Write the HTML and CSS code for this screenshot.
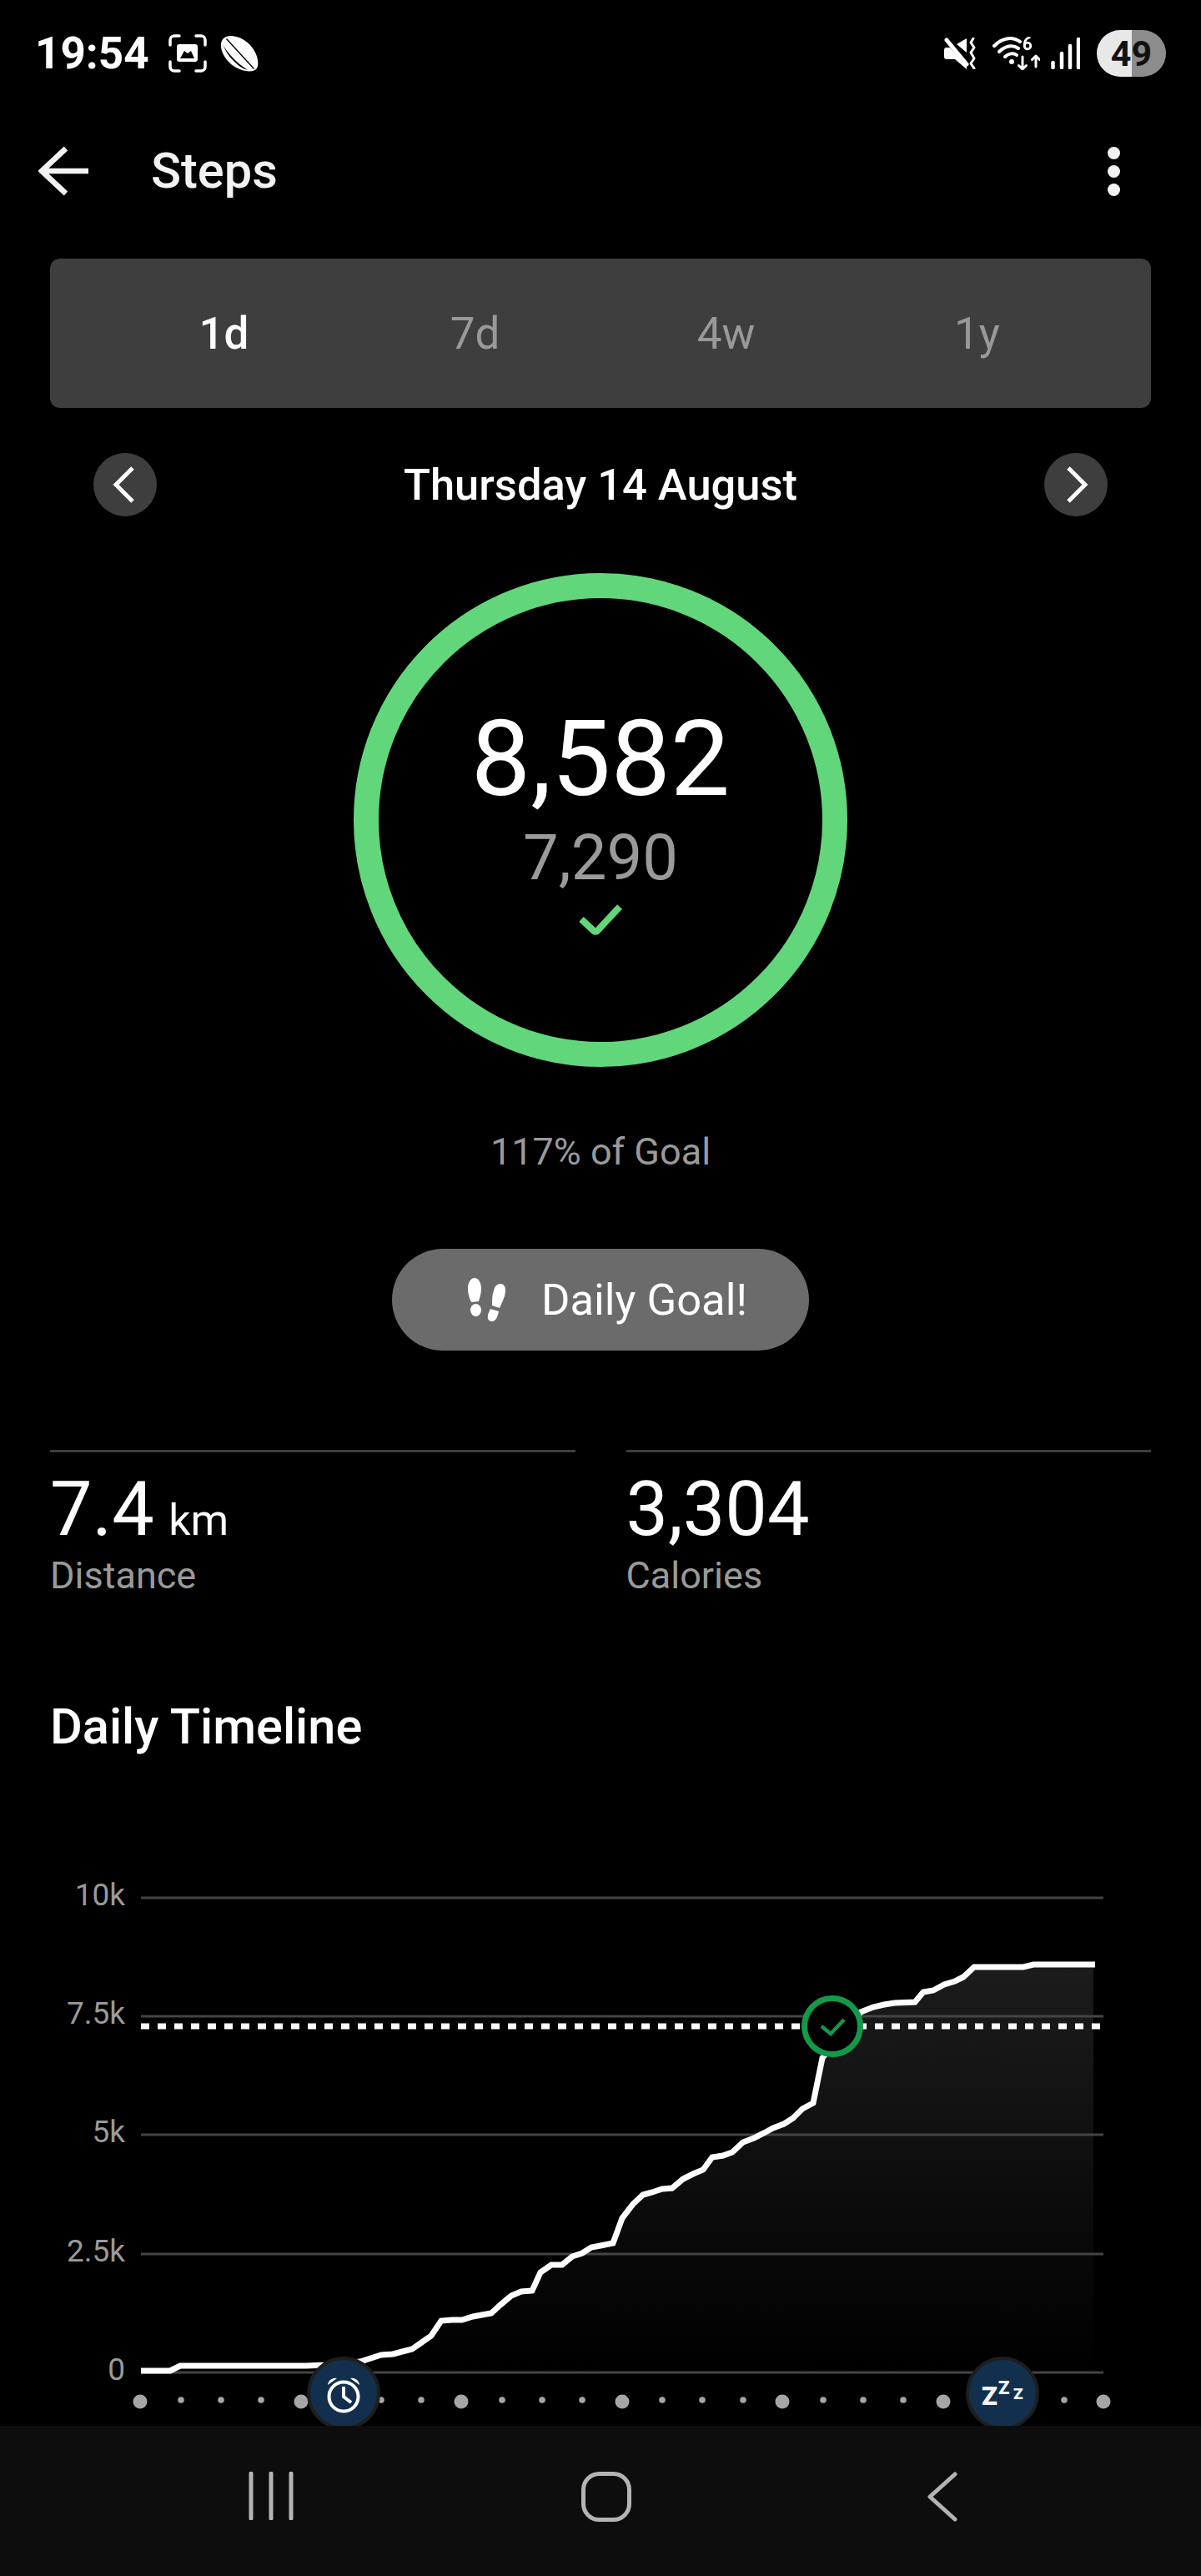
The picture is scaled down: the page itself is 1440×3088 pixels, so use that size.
FILE: index.html
```html
<!DOCTYPE html>
<html lang="en">
<head>
    <meta charset="UTF-8">
    <meta name="viewport" content="width=device-width, initial-scale=1.0">
    <title>Steps</title>
    <link rel="stylesheet" href="styles.css">
</head>
<body>

    <!-- Status bar -->
    <div class="status-bar">
        <div class="status-left">
            <span class="clock">19:54</span>
            <svg class="icon-capture" viewBox="0 0 46 46">
                <path d="M2 13V7a5 5 0 0 1 5-5h6M33 2h6a5 5 0 0 1 5 5v6M44 33v6a5 5 0 0 1-5 5h-6M13 44H7a5 5 0 0 1-5-5v-6" fill="none" stroke="#fff" stroke-width="3.500" stroke-linecap="round"/>
                <path fill-rule="evenodd" d="M13 12h19a3 3 0 0 1 3 3v15a3 3 0 0 1-3 3H13a3 3 0 0 1-3-3V15a3 3 0 0 1 3-3zM14 29h17l-4-9-4 3-4-3z" fill="#fff"/>
            </svg>
            <svg class="icon-ball" viewBox="0 0 46 46">
                <path fill-rule="evenodd" d="M3 5C9-1 24 2 34 12s13 25 8 30-22 2-32-8S-3 11 3 5zM7 5l33 36-1 1L6 6zM2 12c3 8 8 15 13 20s10 9 17 11C25 38 18 33 13 27S5 18 2 12z" fill="#fff"/>
            </svg>
        </div>
        <div class="status-right">
            <svg class="icon-mute" viewBox="0 0 38 38">
                <path d="M0 15a3 3 0 0 1 3-3h4l20 22v4L13 26H3a3 3 0 0 1-3-3zM15 8L27 1v17z" fill="#fff"/>
                <path d="M3 3l24 29" stroke="#fff" stroke-width="5" stroke-linecap="round"/>
                <path d="M35 1l-3 5 4 6-4 6 4 7-4 6 4 6" fill="none" stroke="#fff" stroke-width="3" stroke-linecap="round" stroke-linejoin="round"/>
            </svg>
            <svg class="icon-wifi" viewBox="0 0 57 40">
                <g fill="none" stroke="#fff" stroke-linecap="round" stroke-linejoin="round">
                    <path d="M2 11C11 2 23-1 33 6" stroke-width="4"/>
                    <path d="M8 18c7-7 16-9 23-4" stroke-width="4"/>
                    <path d="M15 24c4-4 10-5 14-2" stroke-width="4"/>
                    <path d="M36 24v15m-4.500-4.500 4.500 4.500 4.500-4.500M52 36V23m-4.500 4.500 4.500-4.500 4.500 4.500" stroke-width="3"/>
                    <circle cx="42" cy="11" r="3.800" stroke-width="2.800"/>
                    <path d="M38.200 11c0-5 2-9 6-10" stroke-width="2.800"/>
                </g>
                <circle cx="23" cy="30" r="3" fill="#fff"/>
            </svg>
            <svg class="icon-signal" viewBox="0 0 35 38">
                <g stroke="#fff" stroke-width="4.500" stroke-linecap="round">
                    <path d="M2.500 30v6M13 19v17M23 10v26M33 2v34"/>
                </g>
            </svg>
            <div class="battery"><span>49</span></div>
        </div>
    </div>

    <!-- App bar -->
    <div class="app-bar">
        <svg class="icon-back" viewBox="0 0 60 60">
            <path d="M33 3L4 30l29 27M4 30h56" fill="none" stroke="#f2f2f2" stroke-width="6.500"/>
        </svg>
        <h1 class="page-title">Steps</h1>
        <div class="more-dots">
            <span></span><span></span><span></span>
        </div>
    </div>

    <div class="tabs">
        <div class="tab active">1d</div>
        <div class="tab">7d</div>
        <div class="tab">4w</div>
        <div class="tab">1y</div>
    </div>

    <div class="date-row">
        <div class="round-btn">
            <svg viewBox="0 0 76 76"><path d="M47 18L27 38l20 20" fill="none" stroke="#fff" stroke-width="5"/></svg>
        </div>
        <div class="date-label">Thursday 14 August</div>
        <div class="round-btn">
            <svg viewBox="0 0 76 76"><path d="M29 18l20 20-20 20" fill="none" stroke="#fff" stroke-width="5"/></svg>
        </div>
    </div>

    <!-- Ring -->
    <div class="ring">
        <div class="ring-value">8,582</div>
        <div class="ring-goal">7,290</div>
        <svg class="ring-check" viewBox="0 0 52 38">
            <path d="M3 19l15 14q2 1.500 4 0L49 4" fill="none" stroke="#62d67b" stroke-width="8"/>
        </svg>
    </div>

    <div class="goal-percent">117% of Goal</div>

    <div class="pill">
        <svg class="icon-steps" viewBox="0 0 48 52">
            <path d="M9 0c5 0 8 6 8 13 0 6-2 11-3 15L5 29C3 25 1 19 1 13 1 6 4 0 9 0z" fill="#fff"/>
            <ellipse cx="10.500" cy="38.500" rx="6.500" ry="7.500" fill="#fff"/>
            <path d="M40 7c4 0 6 3 6 8 0 7-4 14-7 21l-9-3c0-7 0-13 2-18 1-5 4-8 8-8z" fill="#fff"/>
            <path d="M28 37l10 3c-1 5-3 12-8 12-4 0-6-3-5-7 0-3 2-5 3-8z" fill="#fff"/>
        </svg>
        <span>Daily Goal!</span>
    </div>

    <!-- Distance and calories -->
    <div class="stats">
        <div class="stat">
            <div class="stat-value">7.4 <span class="stat-unit">km</span></div>
            <div class="stat-label">Distance</div>
        </div>
        <div class="stat">
            <div class="stat-value">3,304</div>
            <div class="stat-label">Calories</div>
        </div>
    </div>

    <h2 class="section-title">Daily Timeline</h2>

    <!-- Chart -->
    <div class="chart">
        <svg viewBox="0 0 1440 688" width="1440" height="688">
            <defs>
                <linearGradient id="areaFill" x1="0" y1="0" x2="0" y2="1">
                    <stop offset="0" stop-color="#1c1c1c"/>
                    <stop offset="1" stop-color="#000"/>
                </linearGradient>
            </defs>

            <path fill="url(#areaFill)" d="M169 622H204L216 616H367L390 615L432 611L457 603L471 602L494 596L517 580L529 562L542 561H554L567 557L589 553L600 543L613 532L625 527L638 526L648 504L661 495H674L686 485L698 481L709 474L720 472L735 469L746 439L759 422L771 411L782 408L794 404L806 403L819 392L831 386L843 381L854 366L867 364L878 360L891 348L904 343L916 337L927 331L940 326L951 319L962 308L975 301L986 247L1032 192L1047 186L1060 183L1073 181L1097 180L1107 168L1119 166L1132 159L1145 155L1155 150L1168 138H1227L1239 135H1311V624H169Z"/>

            <g class="grid">
                <line x1="169" y1="55" x2="1323" y2="55"/>
                <line x1="169" y1="197" x2="1323" y2="197"/>
                <line x1="169" y1="339" x2="1323" y2="339"/>
                <line x1="169" y1="482" x2="1323" y2="482"/>
                <line x1="169" y1="624" x2="1323" y2="624"/>
            </g>

            <text class="axis" x="150" y="64">10k</text>
            <text class="axis" x="150" y="206">7.5k</text>
            <text class="axis" x="150" y="348">5k</text>
            <text class="axis" x="150" y="491">2.5k</text>
            <text class="axis" x="150" y="633">0</text>

            <line class="goal-line" x1="169" y1="209" x2="1320" y2="209"/>

            <path class="steps-line" d="M169 622H204L216 616H367L390 615L432 611L457 603L471 602L494 596L517 580L529 562L542 561H554L567 557L589 553L600 543L613 532L625 527L638 526L648 504L661 495H674L686 485L698 481L709 474L720 472L735 469L746 439L759 422L771 411L782 408L794 404L806 403L819 392L831 386L843 381L854 366L867 364L878 360L891 348L904 343L916 337L927 331L940 326L951 319L962 308L975 301L986 247L1032 192L1047 186L1060 183L1073 181L1097 180L1107 168L1119 166L1132 159L1145 155L1155 150L1168 138H1227L1239 135H1313"/>

            <circle class="goal-mark" cx="998" cy="209" r="33.500"/>
            <path d="M985 209l11 9 16-17" fill="none" stroke="#14994b" stroke-width="4.500"/>

            <g class="tick-big">
                <circle cx="168" cy="659" r="8.500"/>
                <circle cx="361" cy="659" r="8.500"/>
                <circle cx="553" cy="659" r="8.500"/>
                <circle cx="746" cy="659" r="8.500"/>
                <circle cx="938" cy="659" r="8.500"/>
                <circle cx="1131" cy="659" r="8.500"/>
                <circle cx="1323" cy="659" r="8.500"/>
            </g>
            <g class="tick-small">
                <circle cx="217" cy="657" r="3.800"/>
                <circle cx="265" cy="657" r="3.800"/>
                <circle cx="313" cy="657" r="3.800"/>
                <circle cx="457" cy="657" r="3.800"/>
                <circle cx="505" cy="657" r="3.800"/>
                <circle cx="602" cy="657" r="3.800"/>
                <circle cx="650" cy="657" r="3.800"/>
                <circle cx="698" cy="657" r="3.800"/>
                <circle cx="794" cy="657" r="3.800"/>
                <circle cx="842" cy="657" r="3.800"/>
                <circle cx="891" cy="657" r="3.800"/>
                <circle cx="987" cy="657" r="3.800"/>
                <circle cx="1035" cy="657" r="3.800"/>
                <circle cx="1083" cy="657" r="3.800"/>
                <circle cx="1276" cy="657" r="3.800"/>
            </g>

            <!-- Wake up marker -->
            <circle class="marker" cx="412" cy="649" r="42"/>
            <g fill="none" stroke="#fff" stroke-width="4">
                <circle cx="412" cy="653" r="17.500"/>
                <path d="M412 641v12l9 7"/>
            </g>
            <path d="M393 639a9 9 0 0 1 11-8zM431 639a9 9 0 0 0-11-8z" fill="#fff"/>

            <!-- Bed time marker -->
            <circle class="marker" cx="1202" cy="649" r="42"/>
            <text class="zzz zzz-big" x="1177" y="663">Z</text>
            <text class="zzz zzz-mid" x="1197" y="650">Z</text>
            <text class="zzz zzz-small" x="1215" y="656">Z</text>
        </svg>
    </div>

    <!-- Navigation bar -->
    <div class="nav-bar">
        <svg class="nav-recents" viewBox="0 0 54 58">
            <path d="M3 2v54M27 2v54M51 2v54" stroke="#b4b4b4" stroke-width="5" stroke-linecap="round"/>
        </svg>
        <svg class="nav-home" viewBox="0 0 60 60">
            <rect x="2.500" y="2.500" width="55" height="55" rx="19" fill="none" stroke="#b4b4b4" stroke-width="5"/>
        </svg>
        <svg class="nav-return" viewBox="0 0 36 60">
            <path d="M33 3L3 30l30 27" fill="none" stroke="#b4b4b4" stroke-width="5" stroke-linecap="round" stroke-linejoin="round"/>
        </svg>
    </div>

</body>
</html>
```

FILE: styles.css
```css
* {
    box-sizing: border-box;
}

body {
    margin: 0;
    width: 1440px;
    height: 3088px;
    overflow: hidden;
    background-color: #000;
    color: #fff;
    font-family: 'Roboto', 'Liberation Sans', sans-serif;
    display: flex;
    flex-direction: column;
}

h1, h2 {
    margin: 0;
}

/* Status bar */
.status-bar {
    height: 128px;
    flex: none;
    padding: 0 42px 0 42px;
    display: flex;
    justify-content: space-between;
    align-items: center;
}

.status-left, .status-right {
    display: flex;
    align-items: center;
}

.clock {
    font-size: 53px;
    font-weight: 700;
    width: 160px;
}

.icon-capture {
    width: 46px;
    height: 46px;
}

.icon-ball {
    width: 46px;
    height: 46px;
    margin-left: 17px;
}

.icon-mute {
    width: 38px;
    height: 38px;
}

.icon-wifi {
    width: 57px;
    height: 40px;
    margin-left: 20px;
}

.icon-signal {
    width: 35px;
    height: 38px;
    margin-left: 13px;
}

.battery {
    width: 83px;
    height: 56px;
    margin-left: 20px;
    border-radius: 28px;
    background: linear-gradient(90deg, #e8e8e8 50%, #8c8c8c 50%);
    color: #111;
    font-size: 43px;
    font-weight: 700;
    display: flex;
    align-items: center;
    justify-content: center;
}

/* App bar */
.app-bar {
    height: 154px;
    flex: none;
    padding: 0 97px 0 46px;
    display: flex;
    align-items: center;
}

.icon-back {
    width: 60px;
    height: 60px;
}

.page-title {
    font-size: 59.5px;
    font-weight: 500;
    margin-left: 75px;
    color: #f2f2f2;
    flex: 1;
}

.more-dots {
    display: flex;
    flex-direction: column;
    gap: 7px;
}

.more-dots span {
    width: 15px;
    height: 15px;
    border-radius: 50%;
    background-color: #f2f2f2;
}

/* Tabs */
.tabs {
    margin: 28px 60px 0;
    height: 179px;
    flex: none;
    padding-left: 58px;
    background-color: #3e3e3e;
    border-radius: 12px;
    display: flex;
    align-items: center;
}

.tab {
    width: 301px;
    text-align: center;
    font-size: 53px;
    color: #999;
}

.tab.active {
    color: #fff;
    font-weight: 500;
}

/* Date */
.date-row {
    margin: 54px 112px 0;
    height: 76px;
    flex: none;
    display: flex;
    align-items: center;
    justify-content: space-between;
}

.date-label {
    font-size: 52.5px;
    font-weight: 500;
}

.round-btn {
    width: 76px;
    height: 76px;
    border-radius: 50%;
    background-color: #3e3e3e;
}

.round-btn svg {
    display: block;
}

/* Ring */
.ring {
    width: 592px;
    height: 592px;
    flex: none;
    margin: 68px auto 0;
    border: 30px solid #62d67b;
    border-radius: 50%;
    display: flex;
    flex-direction: column;
    align-items: center;
    padding-top: 120px;
}

.ring-value {
    font-size: 127px;
    line-height: 146px;
}

.ring-goal {
    font-size: 76px;
    line-height: 90px;
    color: #9a9a9a;
}

.ring-check {
    width: 52px;
    height: 38px;
    margin-top: 10px;
}

.goal-percent {
    margin-top: 75px;
    text-align: center;
    font-size: 45px;
    line-height: 54px;
    color: #9a9a9a;
}

/* Daily goal pill */
.pill {
    width: 500px;
    height: 122px;
    flex: none;
    margin: 89px auto 0;
    padding-left: 90px;
    border-radius: 61px;
    background-color: #6b6b6b;
    font-size: 52.5px;
    display: flex;
    align-items: center;
}

.icon-steps {
    width: 48px;
    height: 52px;
    margin-right: 41px;
}

/* Stats */
.stats {
    margin: 119px 60px 0;
    flex: none;
    display: flex;
    gap: 61px;
}

.stat {
    flex: 1;
    border-top: 3px solid #3e3e3e;
    padding-top: 16px;
}

.stat-value {
    font-size: 90px;
    line-height: 106px;
    word-spacing: -5px;
}

.stat-unit {
    font-size: 52px;
    line-height: 1;
}

.stat-label {
    font-size: 45px;
    line-height: 52px;
    color: #9a9a9a;
}

.section-title {
    margin: 120px 60px 0;
    font-size: 59.5px;
    font-weight: 500;
    line-height: 70px;
}

/* Chart */
.chart {
    flex: 1;
    min-height: 0;
    margin-top: 115px;
    overflow: hidden;
}

.chart svg {
    display: block;
}

.grid line {
    stroke: #444;
    stroke-width: 3;
}

.axis {
    font-size: 37px;
    fill: #9a9a9a;
    text-anchor: end;
}

.goal-line {
    stroke: #fff;
    stroke-width: 7;
    stroke-dasharray: 10 10;
}

.steps-line {
    fill: none;
    stroke: #fff;
    stroke-width: 7;
}

.goal-mark {
    fill: #000;
    stroke: #14994b;
    stroke-width: 7;
}

.tick-big circle, .tick-small circle {
    fill: #a6a6a6;
}

.marker {
    fill: #12304d;
    stroke: #1e1e1e;
    stroke-width: 4;
}

.zzz {
    fill: #f2f2f2;
    font-weight: 900;
}

.zzz-big {
    font-size: 31px;
}

.zzz-mid {
    font-size: 22px;
}

.zzz-small {
    font-size: 19px;
}

/* Navigation bar */
.nav-bar {
    height: 180px;
    flex: none;
    position: relative;
    background-color: #0d0d0d;
}

.nav-recents, .nav-home, .nav-return {
    position: absolute;
    top: 55px;
}

.nav-recents {
    left: 298px;
    width: 54px;
    height: 58px;
}

.nav-home {
    left: 697px;
    width: 60px;
    height: 60px;
}

.nav-return {
    left: 1112px;
    width: 36px;
    height: 60px;
}
```
